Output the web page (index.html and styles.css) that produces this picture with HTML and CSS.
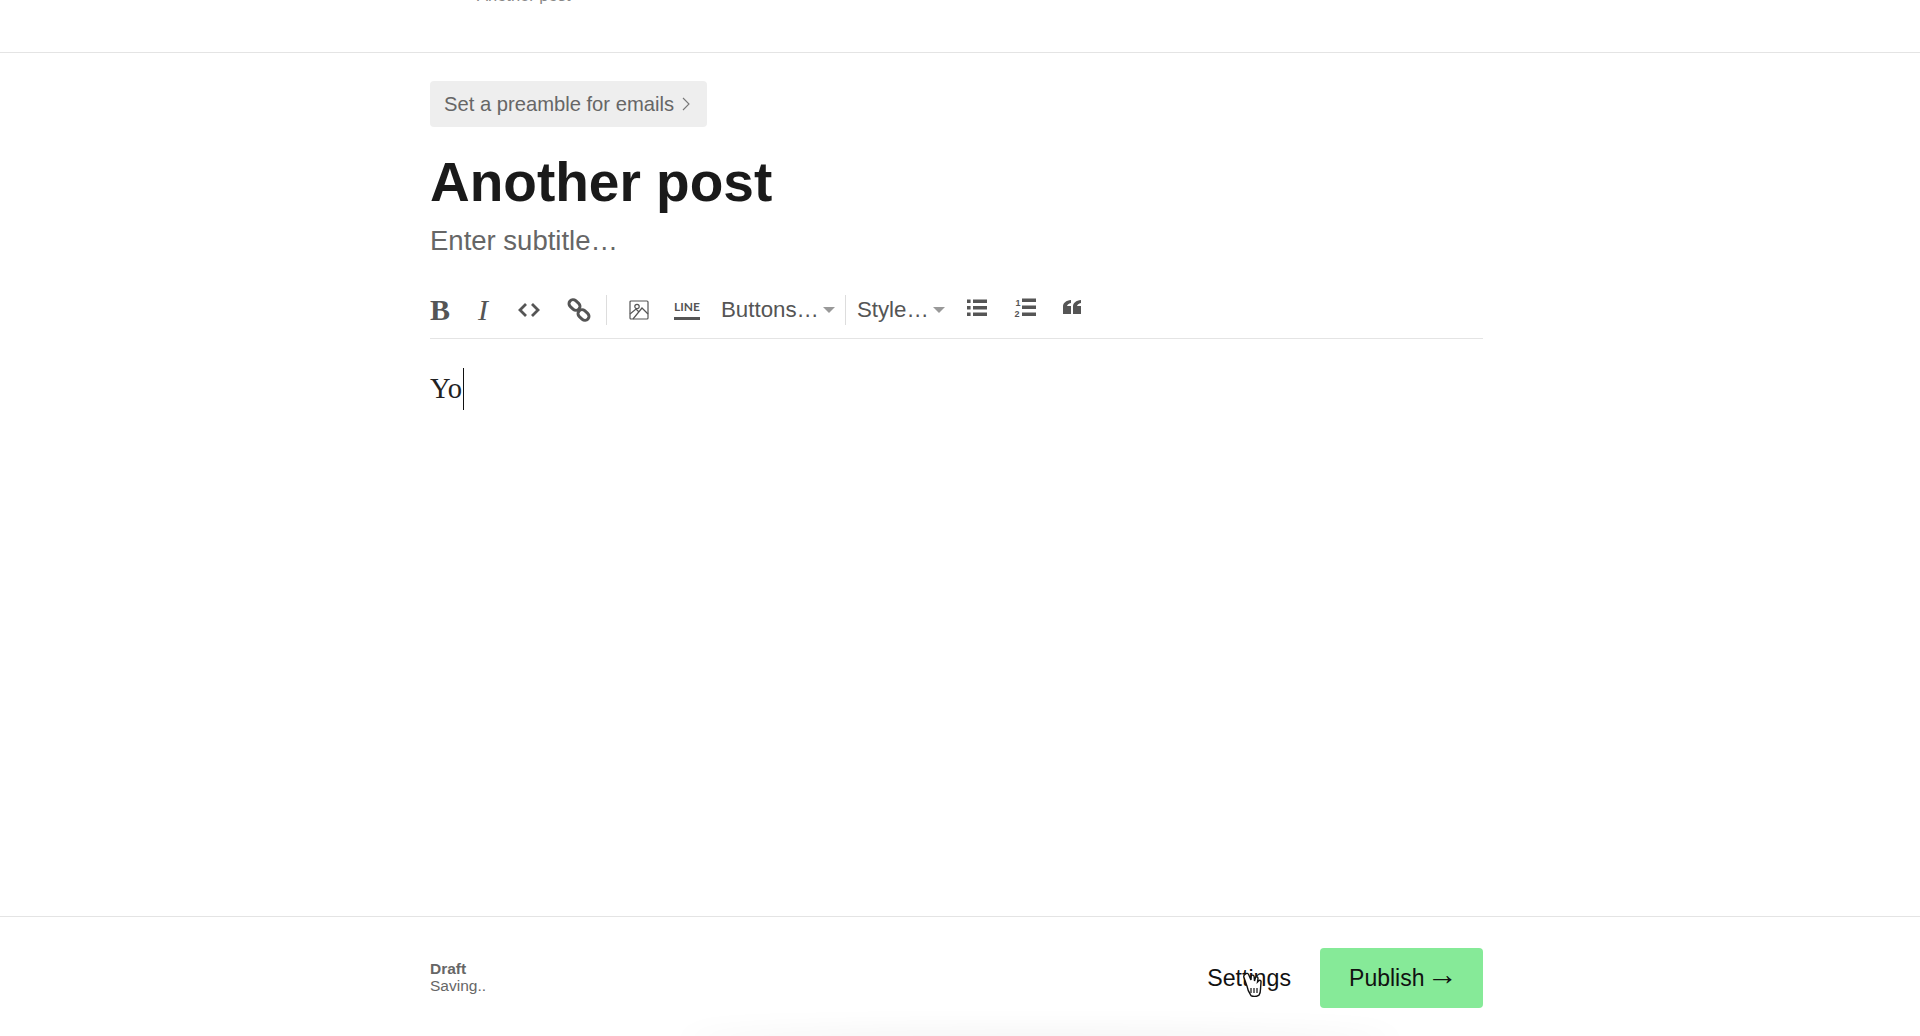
FILE: index.html
```html
<!DOCTYPE html>
<html lang="en">

<head>
  <meta charset="UTF-8">
  <meta name="viewport" content="width=device-width, initial-scale=1.0">
  <title>Another post</title>
  <link rel="stylesheet" href="styles.css">
</head>

<body>
  <header class="top-bar">
    <div class="column">
      <span class="top-title">Another post</span>
    </div>
  </header>

  <main class="column editor">
    <button class="preamble-btn">Set a preamble for emails
      <svg class="chevron" width="8" height="14" viewBox="0 0 8 14"><path d="M1 1l6 6-6 6" fill="none" stroke="#777" stroke-width="1.1"/></svg>
    </button>
    <h1 class="post-title">Another post</h1>
    <p class="post-subtitle">Enter subtitle…</p>

    <div class="toolbar">
      <span class="tool-letter bold">B</span>
      <span class="tool-letter italic">I</span>
      <svg class="tool-icon code-icon" width="22" height="16" viewBox="0 0 22 16"><path d="M8 2L2 8l6 6M14 2l6 6-6 6" fill="none" stroke="#555" stroke-width="2.8"/></svg>
      <svg class="tool-icon link-icon" width="24" height="24" viewBox="0 0 24 24">
        <g fill="none" stroke="#555" stroke-width="3">
          <rect x="1.500" y="3" width="12" height="8" rx="4" transform="rotate(42 7.500 7)"/>
          <rect x="10.500" y="13" width="12" height="8" rx="4" transform="rotate(42 16.500 17)"/>
        </g>
      </svg>
      <span class="tool-sep"></span>
      <svg class="tool-icon image-icon" width="20" height="20" viewBox="0 0 20 20">
        <g fill="none" stroke="#555" stroke-width="1.2">
          <rect x="1" y="1" width="18" height="18" rx="1"/>
          <circle cx="8" cy="6.5" r="2.2"/>
          <path d="M1 14l6-5 3 3M4 19L13 8l6 6"/>
        </g>
      </svg>
      <span class="line-icon">LINE</span>
      <span class="tool-select buttons-select">Buttons…<i class="caret-down"></i></span>
      <span class="tool-sep short"></span>
      <span class="tool-select style-select">Style…<i class="caret-down"></i></span>
      <svg class="tool-icon ul-icon" width="20" height="18" viewBox="0 0 20 18">
        <path d="M6 .5h14v3.600H6zM6 7h14v3.600H6zM6 13.500h14v3.600H6zM0 .5h3.600v3.600H0zM0 7h3.600v3.600H0zM0 13.500h3.600v3.600H0z" fill="#555"/>
      </svg>
      <svg class="tool-icon ol-icon" width="22" height="20" viewBox="0 0 22 20">
        <path d="M8 .5h14v3.600H8zM8 7.500h14v3.600H8zM8 14.500h14v3.600H8z" fill="#555"/>
        <text x="1.500" y="8" class="ol-num">1</text>
        <text x="0.500" y="19" class="ol-num">2</text>
      </svg>
      <svg class="tool-icon quote-icon" width="18" height="15" viewBox="0 0 18 15">
        <path d="M8 0v3C5.500 3.500 4.500 4.500 4 6h4v8H0V6.500C0 3 3 .5 8 0zM18 0v3c-2.500.5-3.500 1.500-4 3h4v8h-8V6.500C10 3 13 .5 18 0z" fill="#555"/>
      </svg>
    </div>

    <div class="post-body"><span class="body-text">Yo</span><span class="text-caret"></span></div>
  </main>

  <footer class="bottom-bar">
    <div class="column bottom-row">
      <div class="status">
        <strong>Draft</strong>
        <span>Saving..</span>
      </div>
      <div class="actions">
        <span class="settings-link">Settings
          <svg class="hand-cursor" width="22" height="25" viewBox="0 0 22 25">
            <path d="M2.500 2c1.200-1.200 2.600-.6 3.200.8L8 8l.2-4c1-1.500 2.700-1 2.900.5l.4 4.500 1-3.500c1-1.200 2.500-.6 2.500 1L14.500 10l1.500-1.500c1.200-.6 2.300.3 2 1.700l-.5 7c0 3-.5 4.500-1.500 6-2.500 1.500-6 1.500-8 .5-2-3-3.500-6-4-9.500L.8 5c-.4-1.200.7-2.200 1.700-3z" fill="#fff" stroke="#111" stroke-width="1.400"/>
            <path d="M8 16v5M11 16v5M14 16v5" stroke="#111" stroke-width="1.200"/>
          </svg>
        </span>
        <button class="publish-btn">Publish <span class="arrow">→</span></button>
      </div>
    </div>
    <div class="bottom-shadow"></div>
  </footer>
</body>

</html>
```

FILE: styles.css
```css
* {
  box-sizing: border-box;
}

html,
body {
  height: 100%;
}

body {
  margin: 0;
  background-color: white;
  font-family: "Liberation Sans", Arial, sans-serif;
  color: #555;
  display: flex;
  flex-direction: column;
  overflow: hidden;
}

.column {
  width: 1053px;
  margin-left: 430px;
}

.top-bar {
  height: 53px;
  flex-shrink: 0;
  border-bottom: 1px solid #e4e4e4;
  overflow: hidden;
}

.top-title {
  display: block;
  margin-top: -15px;
  padding-left: 47px;
  font-size: 16.5px;
  line-height: 20px;
  color: #888;
}

.editor {
  flex: 1;
  padding-top: 28px;
}

.preamble-btn {
  display: flex;
  align-items: center;
  gap: 8px;
  height: 46px;
  padding: 0 17px 0 14px;
  border: none;
  border-radius: 4px;
  background-color: #eee;
  color: #666;
  font-family: inherit;
  font-size: 20.2px;
}

.post-title {
  margin: 23px 0 0;
  font-size: 55px;
  line-height: 64px;
  font-weight: bold;
  color: #1a1a1a;
}

.post-subtitle {
  margin: 10px 0 0;
  font-size: 27.5px;
  line-height: 34px;
  color: #666;
}

.toolbar {
  display: flex;
  align-items: center;
  height: 58px;
  margin-top: 23px;
  border-bottom: 1px solid #e4e4e4;
}

.tool-letter {
  font-family: "Liberation Serif", serif;
  font-size: 30px;
  color: #555;
}

.bold {
  font-weight: bold;
}

.italic {
  font-style: italic;
  margin-left: 28px;
}

.code-icon {
  margin-left: 30px;
}

.link-icon {
  margin-left: 27px;
}

.tool-sep {
  width: 1px;
  height: 30px;
  margin: 0 22px 0 15px;
  background-color: #ddd;
}

.tool-sep.short {
  margin: 0 11px 0 10px;
}

.line-icon {
  margin-left: 25px;
  padding-bottom: 3px;
  border-bottom: 3px solid #555;
  font-family: "Lato", sans-serif;
  font-size: 12px;
  font-weight: bold;
  color: #555;
}

.tool-select {
  display: flex;
  align-items: center;
  font-size: 22.3px;
  color: #555;
}

.buttons-select {
  margin-left: 21px;
}

.caret-down {
  width: 0;
  height: 0;
  margin-left: 4px;
  border-left: 6px solid transparent;
  border-right: 6px solid transparent;
  border-top: 6px solid #999;
}

.ul-icon {
  margin-left: 22px;
  margin-top: -4px;
}

.ol-icon {
  margin-left: 27px;
  margin-top: -4px;
}

.ol-num {
  font-size: 9px;
  font-weight: bold;
  fill: #555;
}

.quote-icon {
  margin-left: 27px;
  margin-top: -4px;
}

.post-body {
  display: flex;
  align-items: center;
  margin-top: 29px;
  height: 42px;
}

.body-text {
  font-family: "Liberation Serif", serif;
  font-size: 28.5px;
  color: #222;
}

.text-caret {
  width: 1px;
  height: 42px;
  margin-left: 1px;
  background-color: #111;
}

.bottom-bar {
  position: relative;
  height: 120px;
  flex-shrink: 0;
  border-top: 1px solid #e4e4e4;
  overflow: hidden;
}

.bottom-row {
  display: flex;
  justify-content: space-between;
  align-items: center;
  height: 60px;
  margin-top: 31px;
}

.status {
  display: flex;
  flex-direction: column;
  margin-top: -2px;
  font-size: 15.5px;
  line-height: 17px;
  color: #666;
}

.actions {
  display: flex;
  align-items: center;
  gap: 29px;
}

.settings-link {
  position: relative;
  font-size: 23.2px;
  color: #111;
}

.hand-cursor {
  position: absolute;
  left: 36px;
  top: 7px;
}

.publish-btn {
  width: 163px;
  height: 60px;
  padding: 0 0 0 4px;
  border: none;
  border-radius: 4px;
  background-color: #86ea98;
  color: #111;
  font-family: inherit;
  font-size: 23px;
}

.arrow {
  margin-left: -4px;
  font-size: 31px;
  line-height: 20px;
  vertical-align: 1px;
}

.bottom-shadow {
  position: absolute;
  left: 680px;
  bottom: -14px;
  width: 720px;
  height: 14px;
  border-radius: 50%;
  box-shadow: 0 -3px 28px rgba(0, 0, 0, 0.08);
}
```
